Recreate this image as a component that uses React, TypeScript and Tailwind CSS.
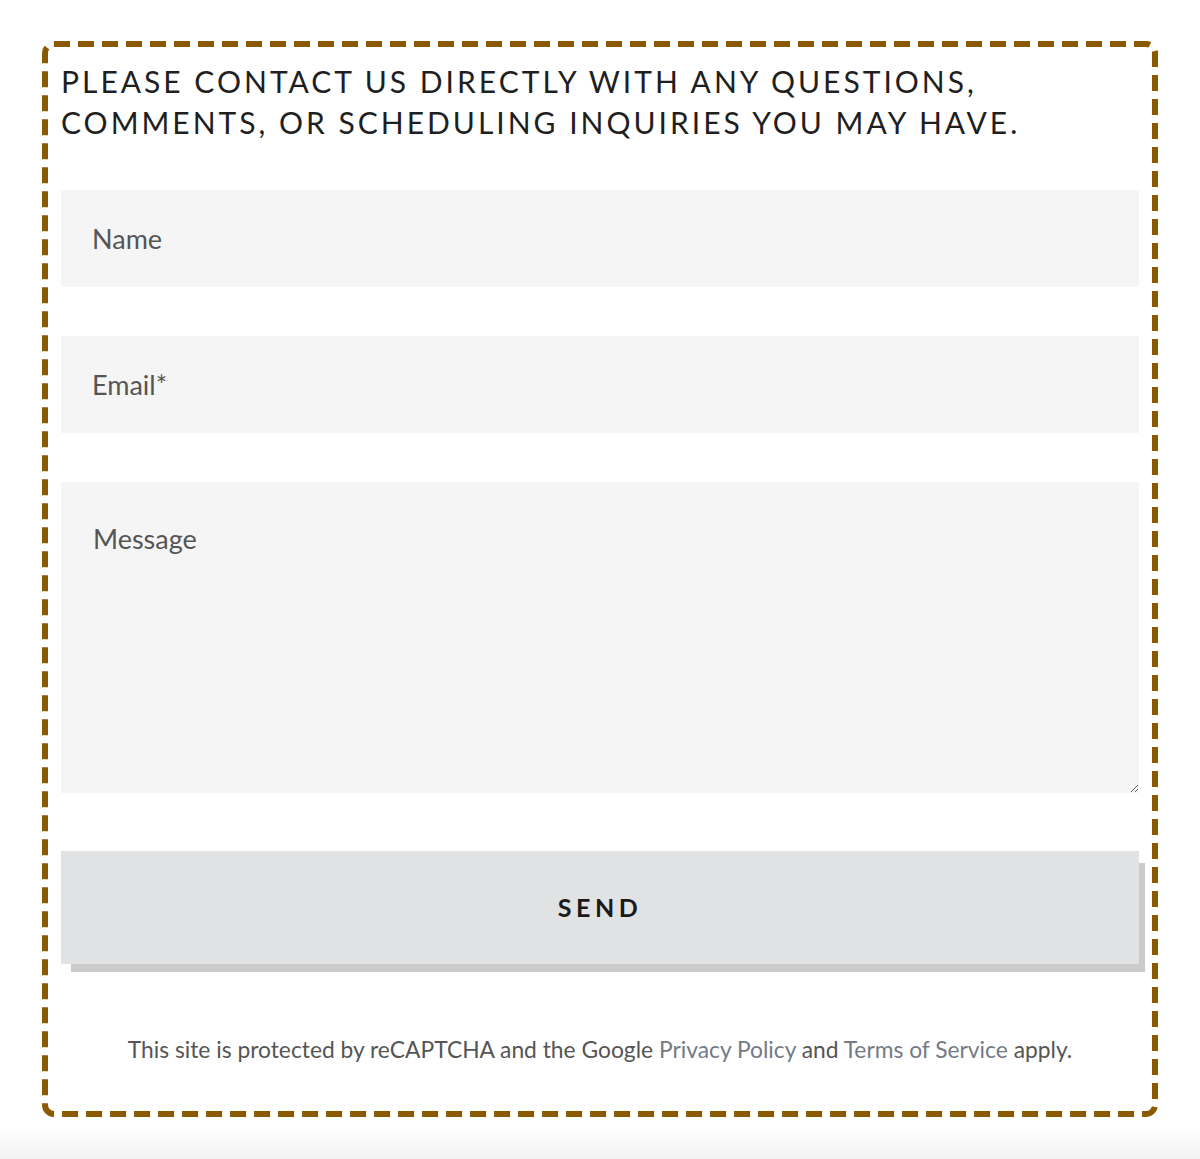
export default function App() {
  return (
    <div className="relative min-h-[1159px] w-full bg-white font-['Lato','Open_Sans',sans-serif]">
      <div className="absolute inset-x-0 bottom-0 h-[32px] bg-gradient-to-b from-white to-[#f3f3f3]" />
      <div className="relative pl-[42px] pt-[41px]">
        <div className="relative h-[1076px] w-[1116px] px-[19px] pt-[20px]">
          {/* dashed frame */}
          <svg className="pointer-events-none absolute inset-0" width="1116" height="1076">
            <rect
              x="3"
              y="3"
              width="1110"
              height="1070"
              rx="9"
              fill="none"
              stroke="#8a5a00"
              strokeWidth="6"
              strokeDasharray="16 8"
            />
          </svg>

          <h2 className="text-[30px] font-normal uppercase leading-[41px] tracking-[0.1em] text-[#1f1f1f]">
            Please contact us directly with any questions, comments, or scheduling inquiries you may have.
          </h2>

          <form className="mt-[47px] flex flex-col">
            <input
              type="text"
              placeholder="Name"
              className="h-[97px] w-full bg-[#f5f5f5] px-[31px] text-[27px] text-[#333] outline-none placeholder:text-[#555]"
            />
            <input
              type="email"
              placeholder="Email*"
              className="mt-[49px] h-[97px] w-full bg-[#f5f5f5] px-[31px] text-[27px] text-[#333] outline-none placeholder:text-[#555]"
            />
            <textarea
              placeholder="Message"
              className="mt-[49px] h-[311px] w-full resize-y bg-[#f5f5f5] px-[32px] pt-[38px] text-[27px] leading-[38px] text-[#333] outline-none placeholder:text-[#555]"
            />
            <button
              type="button"
              className="mt-[58px] h-[113px] w-full bg-[#e1e2e4] text-[25px] font-bold uppercase tracking-[0.18em] text-[#1a1a1a] shadow-[8px_10px_0_-2px_#cbcbcb]"
            >
              Send
            </button>
          </form>

          <p className="mt-[69px] text-center text-[22.8px] leading-[32px] text-[#555]">
            This site is protected by reCAPTCHA and the Google{" "}
            <a className="text-[#737a86]">Privacy Policy</a> and{" "}
            <a className="text-[#737a86]">Terms of Service</a> apply.
          </p>
        </div>
      </div>
    </div>
  );
}
